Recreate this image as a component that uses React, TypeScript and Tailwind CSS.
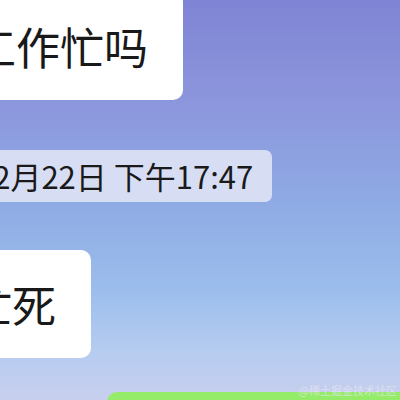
// Chat thread view: incoming bubbles, a time divider and the start of an outgoing bubble.

function IncomingBubble({ text, offset }: { text: string; offset: string }) {
  return (
    <div className="flex">
      <div
        className={`${offset} rounded-[10px] bg-white py-[23px] pl-[35px] pr-[35px] text-[44px] leading-[62px] text-[#191919]`}
      >
        {text}
      </div>
    </div>
  );
}

function TimeDivider({ label }: { label: string }) {
  return (
    <div className="flex">
      <div className="ml-[-42px] rounded-[7px] bg-[#d7def4] py-[8px] pl-[18px] pr-[19px] text-[31px] leading-[36px] text-[#1a1a1a]">
        {label}
      </div>
    </div>
  );
}

export default function App() {
  return (
    <div
      className="relative h-[400px] w-[400px] overflow-hidden bg-[linear-gradient(180deg,#7f84d4_0%,#8c96dc_25%,#8eaae4_50%,#9bbdec_72%,#b6ccf0_88%,#c8cfee_100%)]"
      style={{ fontFamily: '"Noto Sans CJK SC", "Noto Sans", sans-serif' }}
    >
      <div className="flex flex-col">
        <div className="mt-[-8px]">
          <IncomingBubble text="工作忙吗" offset="ml-[-63px]" />
        </div>
        <div className="mt-[50px]">
          <TimeDivider label="12月22日 下午17:47" />
        </div>
        <div className="mt-[48px]">
          <IncomingBubble text="忙死" offset="ml-[-67px]" />
        </div>
        <div className="mt-[34px] flex justify-end">
          <div className="mr-[-20px] h-[60px] w-[313px] rounded-[10px] bg-[#95ec69]" />
        </div>
      </div>
      <span className="absolute bottom-[3px] right-[3px] text-[11px] leading-[14px] text-[#e6e6f0]/70">
        @稀土掘金技术社区
      </span>
    </div>
  );
}
